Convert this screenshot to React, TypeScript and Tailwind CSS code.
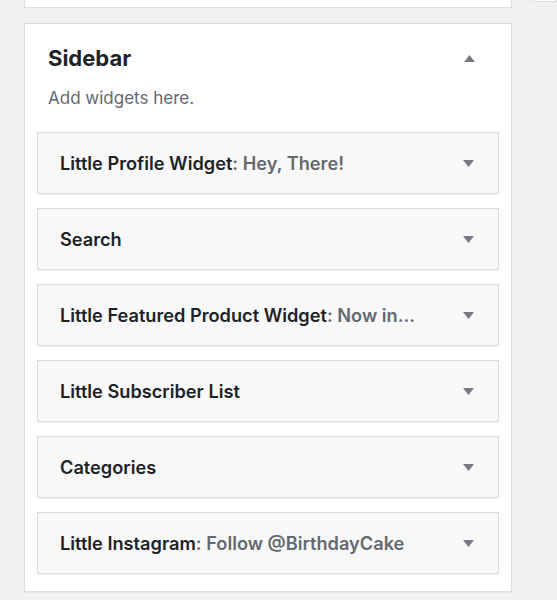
const widgets: { title: string; sub?: string }[] = [
  { title: 'Little Profile Widget', sub: 'Hey, There!' },
  { title: 'Search' },
  { title: 'Little Featured Product Widget', sub: 'Now in...' },
  { title: 'Little Subscriber List' },
  { title: 'Categories' },
  { title: 'Little Instagram', sub: 'Follow @BirthdayCake' },
];

function Caret({ up }: { up?: boolean }) {
  return (
    <svg width="11" height="7" viewBox="0 0 11 7" className="shrink-0">
      <path d={up ? 'M0 7 L5.5 0 L11 7 Z' : 'M0 0 L11 0 L5.5 7 Z'} fill="#787c82" />
    </svg>
  );
}

function WidgetRow({ title, sub }: { title: string; sub?: string }) {
  return (
    <div className="flex h-[62px] items-center justify-between border border-[#dcdcde] bg-[#f8f8f8] pl-[22px] pr-[24px] shadow-[0_1px_1px_rgba(0,0,0,0.04)]">
      <div className="pt-[2px] text-[18.2px] font-semibold text-[#1d2327]">
        {title}
        {sub && <span className="text-[#646970]">: {sub}</span>}
      </div>
      <Caret />
    </div>
  );
}

export default function App() {
  return (
    <div
      className="flex min-h-[600px] bg-[#f1f1f1]"
      style={{ fontFamily: 'Inter, "Noto Sans", sans-serif' }}
    >
      <div className="ml-[24px] flex w-[488px] flex-col">
        <div className="h-[8px] border-x border-b border-[#dcdcde] bg-white" />
        <div className="mt-[15px] border border-[#dcdcde] bg-white px-[12px] pb-[17px] shadow-[0_1px_1px_rgba(0,0,0,0.04)]">
          <div className="mt-[20px] flex h-[28px] items-center justify-between pl-[11px] pr-[24px]">
            <h2 className="text-[22px] font-bold leading-[28px] text-[#1d2327]">Sidebar</h2>
            <Caret up />
          </div>
          <p className="mt-[14px] pl-[11px] text-[17px] leading-[24px] text-[#646970]">Add widgets here.</p>
          <div className="mt-[22px] flex flex-col gap-[14px]">
            {widgets.map((w) => (
              <WidgetRow key={w.title} title={w.title} sub={w.sub} />
            ))}
          </div>
        </div>
      </div>
      <div className="ml-[21px] flex-1">
        <div className="h-[2px] border-x border-b border-[#dcdcde] bg-white" />
      </div>
    </div>
  );
}
